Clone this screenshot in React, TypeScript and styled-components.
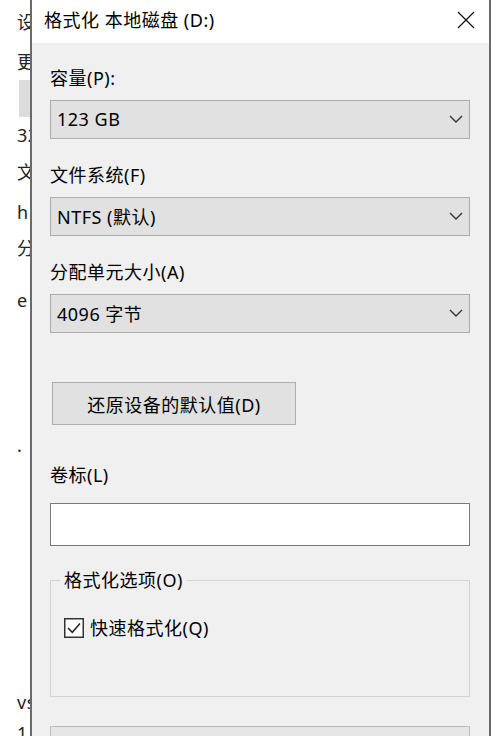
import React from "react";
import styled, { createGlobalStyle } from "styled-components";

const GlobalStyle = createGlobalStyle`
  html, body { margin: 0; padding: 0; background: #fff; }
  body {
    font-family: "Noto Sans", "Noto Sans CJK SC", sans-serif;
    overflow: hidden;
    color: #000;
    letter-spacing: 0.5px;
  }
`;

const Page = styled.div`
  display: flex;
  width: 500px;
  height: 736px;
  overflow: hidden;
  background: #fff;
`;

const BgStrip = styled.div`
  width: 30px;
  flex: none;
  overflow: hidden;
  display: flex;
  flex-direction: column;
  font-size: 18px;
  color: #222;
`;

const BgLine = styled.div<{ $mt: number }>`
  margin-top: ${(p) => p.$mt}px;
  height: 24px;
  line-height: 24px;
  padding-left: 17px;
  white-space: nowrap;
  flex: none;
`;

const BgSelected = styled.div<{ $mt: number }>`
  margin-top: ${(p) => p.$mt}px;
  margin-left: 19px;
  height: 37px;
  background: #dcdcdc;
  flex: none;
`;

const Dialog = styled.div`
  width: 461px;
  flex: none;
  box-sizing: border-box;
  border-left: 2px solid #6a6a6a;
  border-right: 2px solid #6a6a6a;
  display: flex;
  flex-direction: column;
`;

const TitleBar = styled.div`
  height: 43px;
  flex: none;
  background: #fff;
  display: flex;
  align-items: center;
  justify-content: space-between;
  padding: 0 14px 0 12px;
  font-size: 18px;
`;

const TitleText = styled.span`
  line-height: 24px;
  margin-top: -4px;
`;

const CloseIcon = styled.svg`
  width: 18px;
  height: 18px;
  margin-top: -4px;
`;

const Body = styled.div`
  flex: 1;
  background: #f0f0f0;
  padding: 23px 19px 0 18px;
  display: flex;
  flex-direction: column;
`;

const Label = styled.div<{ $mt?: number }>`
  margin-top: ${(p) => p.$mt ?? 0}px;
  height: 24px;
  line-height: 24px;
  font-size: 18px;
  flex: none;
`;

const Select = styled.div`
  margin-top: 10px;
  height: 39px;
  flex: none;
  box-sizing: border-box;
  border: 1px solid #adadad;
  background: #e1e1e1;
  display: flex;
  align-items: center;
  justify-content: space-between;
  padding: 0 6px 1px 6px;
  font-size: 18px;
`;

const Chevron = styled.svg`
  width: 14px;
  height: 8px;
`;

const ResetButton = styled.div`
  margin-top: 49px;
  margin-left: 2px;
  width: 244px;
  height: 43px;
  flex: none;
  box-sizing: border-box;
  border: 1px solid #adadad;
  background: #e1e1e1;
  display: flex;
  align-items: center;
  justify-content: center;
  font-size: 18px;
`;

const TextInput = styled.div`
  margin-top: 16px;
  height: 43px;
  flex: none;
  box-sizing: border-box;
  border: 1px solid #7a7a7a;
  background: #fff;
`;

const GroupBox = styled.fieldset`
  margin: 24px 0 0;
  padding: 0 9px 56px;
  border: 1px solid #d3d3d3;
  flex: none;
  min-width: 0;
`;

const Legend = styled.legend`
  padding: 0 4px;
  font-size: 18px;
  line-height: 20px;
`;

const CheckRow = styled.div`
  margin-top: 26px;
  padding-left: 4px;
  display: flex;
  align-items: center;
  gap: 6px;
  height: 24px;
  font-size: 18px;
  line-height: 24px;
`;

const CheckBox = styled.svg`
  width: 20px;
  height: 20px;
  flex: none;
`;

const Progress = styled.div`
  margin-top: 29px;
  height: 30px;
  flex: none;
  box-sizing: border-box;
  border: 1px solid #bcbcbc;
  background: #e6e6e6;
`;

const RightStrip = styled.div`
  flex: 1;
  background: #fff;
`;

const bgLines: { mt: number; text?: string; selected?: boolean }[] = [
  { mt: 10, text: "设" },
  { mt: 16, text: "更" },
  { mt: 6, selected: true },
  { mt: 6, text: "32" },
  { mt: 13, text: "文" },
  { mt: 16, text: "h" },
  { mt: 12, text: "分" },
  { mt: 28, text: "e" },
  { mt: 121, text: "." },
  { mt: 233, text: "vs" },
  { mt: 7, text: "1" },
];

const ChevronDown = () => (
  <Chevron viewBox="0 0 14 8">
    <path d="M1 1 L7 7 L13 1" fill="none" stroke="#333" strokeWidth="1.4" />
  </Chevron>
);

const Field = ({ label, value, mt }: { label: string; value: string; mt?: number }) => (
  <>
    <Label $mt={mt}>{label}</Label>
    <Select>
      <span>{value}</span>
      <ChevronDown />
    </Select>
  </>
);

export default function App() {
  return (
    <>
      <GlobalStyle />
      <Page>
        <BgStrip>
          {bgLines.map((l, i) =>
            l.selected ? (
              <BgSelected key={i} $mt={l.mt} />
            ) : (
              <BgLine key={i} $mt={l.mt}>
                {l.text}
              </BgLine>
            )
          )}
        </BgStrip>
        <Dialog>
          <TitleBar>
            <TitleText>格式化 本地磁盘 (D:)</TitleText>
            <CloseIcon viewBox="0 0 18 18">
              <path d="M1 1 L17 17 M17 1 L1 17" stroke="#111" strokeWidth="1.2" fill="none" />
            </CloseIcon>
          </TitleBar>
          <Body>
            <Field label="容量(P):" value="123 GB" />
            <Field label="文件系统(F)" value="NTFS (默认)" mt={24} />
            <Field label="分配单元大小(A)" value="4096 字节" mt={24} />
            <ResetButton>还原设备的默认值(D)</ResetButton>
            <Label $mt={38}>卷标(L)</Label>
            <TextInput />
            <GroupBox>
              <Legend>格式化选项(O)</Legend>
              <CheckRow>
                <CheckBox viewBox="0 0 20 20">
                  <rect x="0.75" y="0.75" width="18.5" height="18.5" fill="#fff" stroke="#333" strokeWidth="1.5" />
                  <path d="M4 10 L8.3 14.3 L16 5.5" fill="none" stroke="#222" strokeWidth="1.5" />
                </CheckBox>
                <span>快速格式化(Q)</span>
              </CheckRow>
            </GroupBox>
            <Progress />
          </Body>
        </Dialog>
        <RightStrip />
      </Page>
    </>
  );
}
